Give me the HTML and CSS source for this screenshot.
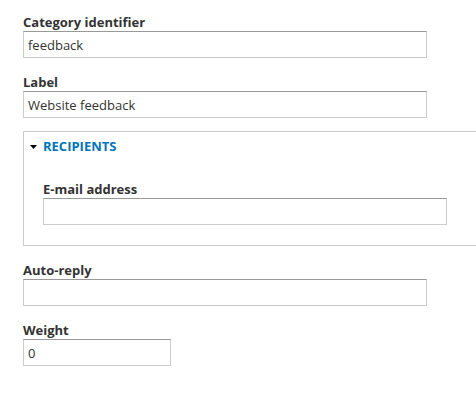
FILE: index.html
```html
<!DOCTYPE html>
<html lang="en">
<head>
<meta charset="utf-8">
<title>Contact category</title>
<link rel="stylesheet" href="styles.css">
</head>
<body>
<form class="form">
  <div class="form-item">
    <label class="form-label">Category identifier</label>
    <input class="form-text" type="text" value="feedback">
  </div>
  <div class="form-item">
    <label class="form-label">Label</label>
    <input class="form-text" type="text" value="Website feedback">
  </div>
  <div class="details">
    <div class="details-summary">
      <svg class="details-arrow" width="7" height="4" viewBox="0 0 7 4"><path d="M0 0H7L3.5 4Z" fill="#000"/></svg>
      <span class="details-title">RECIPIENTS</span>
    </div>
    <div class="details-body">
      <div class="form-item">
        <label class="form-label">E-mail address</label>
        <input class="form-text" type="text" value="">
      </div>
    </div>
  </div>
  <div class="form-item">
    <label class="form-label">Auto-reply</label>
    <input class="form-text" type="text" value="">
  </div>
  <div class="form-item">
    <label class="form-label">Weight</label>
    <input class="form-text form-small" type="text" value="0">
  </div>
</form>
</body>
</html>
```
FILE: styles.css
```css
html, body {
  margin: 0;
  padding: 0;
  background: #fff;
  overflow: hidden;
}
body {
  font-family: "Open Sans", "Noto Sans", sans-serif;
  color: #333;
  font-size: 13px;
}
.form {
  padding: 14px 0 0 23px;
  display: flex;
  flex-direction: column;
  gap: 16px;
}
.form-item {
  display: flex;
  flex-direction: column;
  align-items: flex-start;
}
.form-label {
  font-weight: bold;
  font-size: 13px;
  line-height: 16px;
  height: 17px;
  color: #333;
}
.form-text {
  box-sizing: border-box;
  width: 404px;
  height: 27px;
  margin: 0;
  padding: 0 4px;
  border: 1px solid #ccc;
  border-top-color: #999;
  font-family: inherit;
  font-size: 13px;
  color: #333;
  background: #fff;
  outline: none;
}
.form-small {
  width: 148px;
}
.details {
  box-sizing: border-box;
  width: 454px;
  border: 1px solid #ccc;
  margin-top: -3px;
}
.details-summary {
  display: flex;
  align-items: center;
  padding: 6px 0 0 6px;
  height: 16px;
}
.details-arrow {
  margin-right: 6px;
  margin-top: 1px;
}
.details-title {
  color: #0074bd;
  font-weight: bold;
  font-size: 13px;
  line-height: 16px;
}
.details-body {
  padding: 27px 0 20px 19px;
}
```
